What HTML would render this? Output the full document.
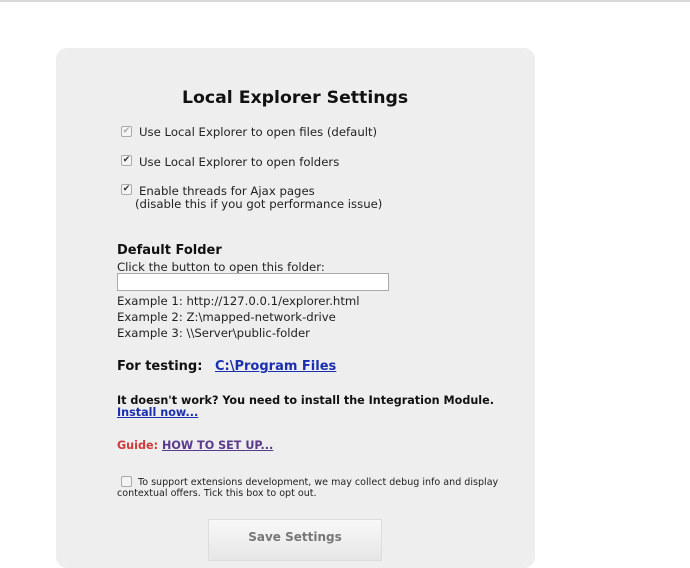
<!DOCTYPE html>
<html><head><meta charset="utf-8"><style>
body{margin:0;width:690px;height:552px;background:#fff;overflow:hidden;position:relative;font-family:"DejaVu Sans",Verdana,sans-serif;color:#222}
.top{position:absolute;left:0;top:0;width:690px;height:2px;background:#d8d8d8}
.panel{position:absolute;left:56px;top:48px;width:479px;height:520px;background:#eeeeee;border-radius:11px}
.t{position:absolute;white-space:nowrap;font-size:11.7px;line-height:13px}
.b{font-weight:bold}
.cb{position:absolute;width:9px;height:9px;border:1px solid #aaa;border-radius:2px;background:#f4f4f4;font-size:9px;line-height:9px;text-align:center;color:#333}
a{color:#1a2fb0;text-decoration:underline}
</style></head><body>
<div class="top"></div>
<div class="panel"></div>
<div class="t b" style="left:182px;top:88px;font-size:17.3px;line-height:20px;color:#111">Local Explorer Settings</div>
<div class="cb" style="left:121px;top:126px;color:#aaa">✔</div>
<div class="t" style="left:139px;top:126px">Use Local Explorer to open files (default)</div>
<div class="cb" style="left:121px;top:155px">✔</div>
<div class="t" style="left:139px;top:156px">Use Local Explorer to open folders</div>
<div class="cb" style="left:121px;top:184px">✔</div>
<div class="t" style="left:139px;top:185px">Enable threads for Ajax pages</div>
<div class="t" style="left:135px;top:198px">(disable this if you got performance issue)</div>
<div class="t b" style="left:117px;top:243px;font-size:13px;line-height:15px;color:#111">Default Folder</div>
<div class="t" style="left:117px;top:261px">Click the button to open this folder:</div>
<div style="position:absolute;left:117px;top:273px;width:270px;height:16px;border:1px solid #aaa;background:#fff"></div>
<div class="t" style="left:117px;top:295px">Example 1: http://127.0.0.1/explorer.html</div>
<div class="t" style="left:117px;top:311px">Example 2: Z:\mapped-network-drive</div>
<div class="t" style="left:117px;top:327px">Example 3: \\Server\public-folder</div>
<div class="t b" style="left:117px;top:359px;font-size:13px;line-height:15px;color:#111">For testing:</div>
<div class="t b" style="left:215px;top:359px;font-size:13px;line-height:15px"><a>C:\Program Files</a></div>
<div class="t b" style="left:117px;top:394px;font-size:11.2px;color:#111">It doesn't work? You need to install the Integration Module.</div>
<div class="t b" style="left:117px;top:406px;font-size:11.2px"><a>Install now...</a></div>
<div class="t b" style="left:117px;top:439px;font-size:11.2px;color:#d03a3a">Guide: <a style="color:#5a3a8a">HOW TO SET UP...</a></div>
<div class="cb" style="left:121px;top:476px"></div>
<div class="t" style="left:138px;top:477px;font-size:9.55px;line-height:11px">To support extensions development, we may collect debug info and display</div>
<div class="t" style="left:117px;top:488px;font-size:9.55px;line-height:11px">contextual offers. Tick this box to opt out.</div>
<div style="position:absolute;left:208px;top:519px;width:172px;height:40px;border:1px solid #ddd;background:linear-gradient(#f8f8f8,#e6e6e6)"></div>
<div class="t b" style="left:208px;top:530px;width:174px;text-align:center;font-size:12px;line-height:14px;color:#777">Save Settings</div>
</body></html>
